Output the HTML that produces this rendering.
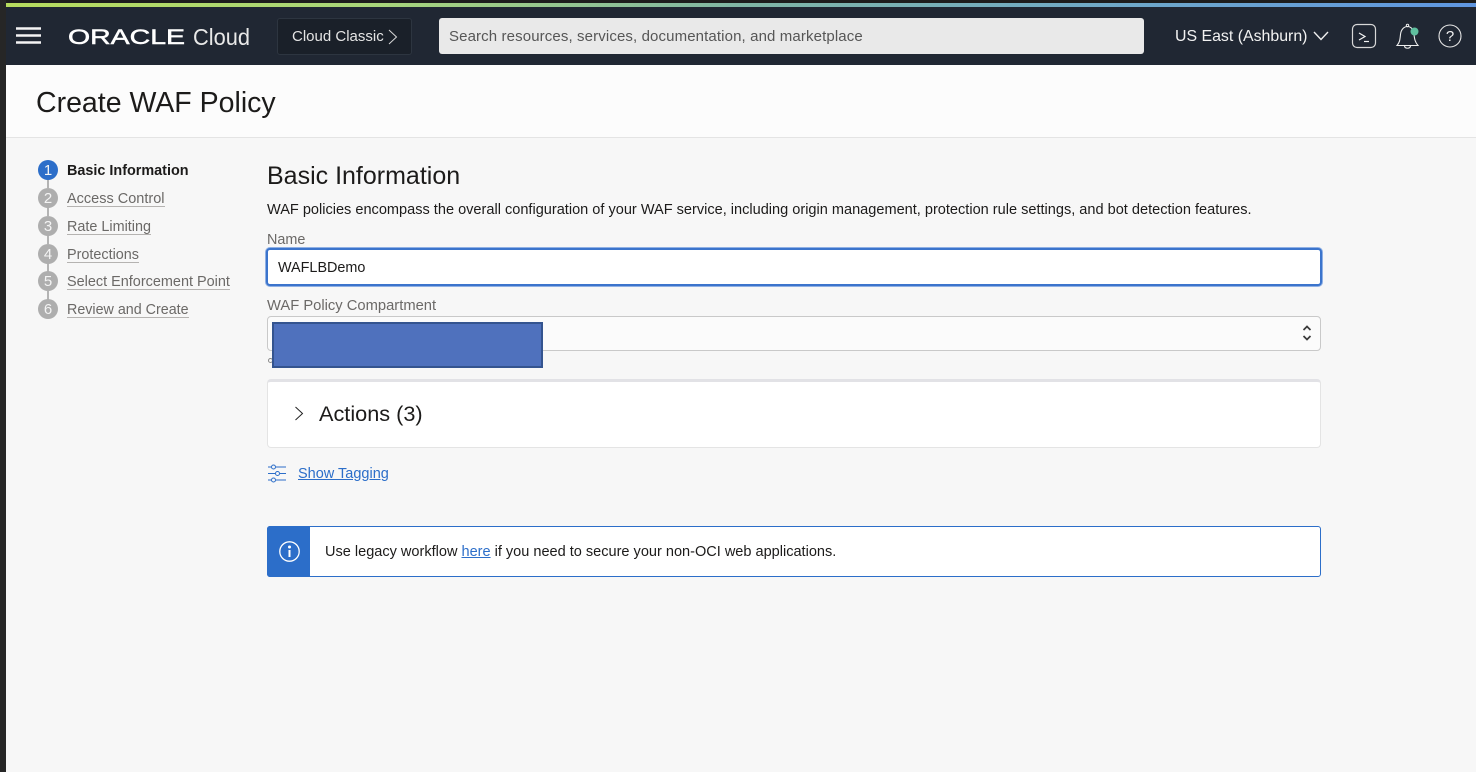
<!DOCTYPE html>
<html lang="en">
<head>
<meta charset="utf-8">
<title>Create WAF Policy</title>
<style>
html,body{margin:0;padding:0;width:1476px;height:772px;overflow:hidden;background:#f7f7f7;font-family:"Liberation Sans",sans-serif;color:#161513}
.a{position:absolute;white-space:nowrap}
a{color:inherit}
.circle{position:absolute;left:38px;width:20px;height:20px;border-radius:50%;background:#aeaeae;color:#f4f4f4;font-size:15px;line-height:21px;text-align:center}
.step{position:absolute;left:67px;font-size:14.4px;line-height:18px;color:#6b6967;white-space:nowrap;border-bottom:1px solid #b5b3b1;height:16px}
.line{position:absolute;left:47px;width:2px;height:9px;background:#b4b4b4}
</style>
</head>
<body>
<div class="a" style="left:0;top:0;width:1476px;height:3px;background:#1d1d1d"></div>
<div class="a" style="left:0;top:0;width:6px;height:772px;background:#262626;z-index:5"></div>
<div class="a" style="left:6px;top:3px;width:1470px;height:4px;background:linear-gradient(90deg,#b7dc5e 0%,#a9d67a 25%,#7fb6a5 50%,#6fa9c8 75%,#5f96e0 100%)"></div>
<div class="a" style="left:6px;top:7px;width:1470px;height:58px;background:#202733"></div>

<svg class="a" style="left:16px;top:27px" width="25" height="17" viewBox="0 0 25 17"><path d="M0 1.500H25M0 8.500H25M0 15.500H25" stroke="#f4f4f4" stroke-width="2.400"/></svg>

<svg class="a" style="left:66px;top:22px" width="190" height="30" viewBox="0 0 190 30">
<text x="2" y="22" font-family="Liberation Sans" font-size="21" fill="#fff" stroke="#fff" stroke-width=".5" textLength="117" lengthAdjust="spacingAndGlyphs">ORACLE</text>
<text x="127" y="23" font-family="Liberation Sans" font-size="23.500" fill="#e8e8e8" textLength="57" lengthAdjust="spacingAndGlyphs">Cloud</text>
</svg>

<div class="a" style="left:277px;top:18px;width:133px;height:35px;background:#1a2029;border:1px solid #2d3540;border-radius:3px"></div>
<div class="a" style="left:292px;top:28px;font-size:15px;line-height:18px;color:#e4e4e4">Cloud Classic</div>
<svg class="a" style="left:387px;top:29px" width="12" height="16" viewBox="0 0 12 16"><path d="M2 1L9.500 8L2 15" fill="none" stroke="#d8d8d8" stroke-width="1"/></svg>

<div class="a" style="left:439px;top:18px;width:705px;height:36px;background:#e9e9e9;border-radius:3px"></div>
<div class="a" style="left:449px;top:28px;font-size:15px;line-height:18px;color:#565656;letter-spacing:.12px">Search resources, services, documentation, and marketplace</div>

<div class="a" style="left:1175px;top:27px;font-size:15.900px;line-height:19px;color:#f2f2f2">US East (Ashburn)</div>
<svg class="a" style="left:1313px;top:30px" width="16" height="12" viewBox="0 0 16 12"><path d="M1 2L8 9.500L15 2" fill="none" stroke="#eee" stroke-width="1.400"/></svg>

<svg class="a" style="left:1351px;top:23px" width="26" height="26" viewBox="0 0 26 26"><rect x="1.500" y="1.500" width="23" height="23" rx="4.500" fill="none" stroke="#d8d8d8" stroke-width="1.200"/><path d="M8 10L14 13.500L8 17" fill="none" stroke="#f4f4f4" stroke-width="1.200"/><path d="M13 18.500H18" stroke="#f4f4f4" stroke-width="1.200"/></svg>
<svg class="a" style="left:1394px;top:23px" width="28" height="26" viewBox="0 0 28 26"><path d="M3 22.500C6 19 6 16 6.500 11.500C7 6.500 10 3.500 13.500 3.500C17 3.500 19.500 6.500 20 11.500C20.500 16 21 19 24 22.500Z" fill="none" stroke="#eee" stroke-width="1.100"/><circle cx="13.500" cy="2.500" r="1.200" fill="none" stroke="#eee" stroke-width="1"/><path d="M10.500 23C11 26 16 26 16.500 23" fill="none" stroke="#eee" stroke-width="1.100"/><circle cx="20.500" cy="8.500" r="4" fill="#5fbf9f"/></svg>
<svg class="a" style="left:1438px;top:24px" width="24" height="24" viewBox="0 0 24 24"><circle cx="12" cy="12" r="11" fill="none" stroke="#e4e4e4" stroke-width="1.100"/><text x="12" y="17" text-anchor="middle" font-family="Liberation Sans" font-size="15" fill="#f2f2f2">?</text></svg>

<div class="a" style="left:6px;top:65px;width:1470px;height:72px;background:#fcfcfc;border-bottom:1px solid #e4e4e4"></div>
<div class="a" style="left:36px;top:86px;font-size:28.500px;line-height:35px;color:#1c1b1a">Create WAF Policy</div>

<div class="line" style="top:179px"></div>
<div class="line" style="top:207px"></div>
<div class="line" style="top:235px"></div>
<div class="line" style="top:263px"></div>
<div class="line" style="top:291px"></div>
<div class="circle" style="top:160px;background:#2c6ec9">1</div>
<div class="circle" style="top:188px">2</div>
<div class="circle" style="top:216px">3</div>
<div class="circle" style="top:244px">4</div>
<div class="circle" style="top:271px">5</div>
<div class="circle" style="top:299px">6</div>
<div class="a" style="left:67px;top:162px;font-size:14.400px;line-height:18px;font-weight:bold;color:#1c1b1a">Basic Information</div>
<div class="step" style="top:190px;font-size:14.500px">Access Control</div>
<div class="step" style="top:218px">Rate Limiting</div>
<div class="step" style="top:246px">Protections</div>
<div class="step" style="top:273px;font-size:14.450px">Select Enforcement Point</div>
<div class="step" style="top:301px;font-size:14.300px">Review and Create</div>

<div class="a" style="left:267px;top:161px;font-size:25px;line-height:31px;color:#1c1b1a">Basic Information</div>
<div class="a" style="left:267px;top:202px;font-size:14.550px;line-height:17px;color:#1c1b1a">WAF policies encompass the overall configuration of your WAF service, including origin management, protection rule settings, and bot detection features.</div>

<div class="a" style="left:267px;top:232px;font-size:14.400px;line-height:16px;color:#6b6967">Name</div>
<div class="a" style="left:266px;top:248px;width:1052px;height:34px;background:#fff;border:2px solid #3b74cc;border-radius:4px;box-shadow:0 0 0 1px #8fb0e4"></div>
<div class="a" style="left:278px;top:259px;font-size:14.400px;line-height:18px;color:#1c1b1a">WAFLBDemo</div>

<div class="a" style="left:267px;top:298px;font-size:14.750px;line-height:17px;color:#6b6967">WAF Policy Compartment</div>
<div class="a" style="left:267px;top:316px;width:1052px;height:33px;background:#fbfbfb;border:1px solid #c9c9c9;border-radius:4px"></div>
<svg class="a" style="left:1301px;top:324px" width="12" height="18" viewBox="0 0 12 18"><path d="M2.500 6L6 2.500L9.500 6M2.500 12L6 15.500L9.500 12" fill="none" stroke="#3a3a3a" stroke-width="1.700"/></svg>
<div class="a" style="left:268px;top:358px;width:5px;height:5px;border:1px solid #8a8a8a;border-radius:50%;box-sizing:border-box"></div>
<div class="a" style="left:272px;top:322px;width:271px;height:46px;box-sizing:border-box;background:#4f71bd;border:2px solid #34548f"></div>

<div class="a" style="left:267px;top:379px;width:1052px;height:65px;background:#fff;border:1px solid #e4e4e4;border-top:3px solid #e2e2e6;border-radius:4px"></div>
<svg class="a" style="left:294px;top:406px" width="10" height="15" viewBox="0 0 10 15"><path d="M1.500 1L8.500 7.500L1.500 14" fill="none" stroke="#222" stroke-width="1"/></svg>
<div class="a" style="left:319px;top:400px;font-size:21.700px;line-height:27px;color:#1c1b1a">Actions (3)</div>

<svg class="a" style="left:267px;top:464px" width="20" height="20" viewBox="0 0 20 20"><g fill="none" stroke="#2c6ec9" stroke-width="1"><path d="M1 3H4M9 3H19M1 9.500H8M13 9.500H19M1 16H4M9 16H19"/><circle cx="6.500" cy="3" r="2"/><circle cx="10.500" cy="9.500" r="2"/><circle cx="6.500" cy="16" r="2"/></g></svg>
<a class="a" style="left:298px;top:466px;font-size:14.500px;line-height:17px;color:#2c6ec9;text-decoration:underline">Show Tagging</a>

<div class="a" style="left:267px;top:526px;width:1054px;height:51px;box-sizing:border-box;background:#fff;border:1px solid #2c6ec9;border-radius:3px"></div>
<div class="a" style="left:267px;top:526px;width:43px;height:51px;background:#2c6ec9;border-radius:3px 0 0 3px"></div>
<svg class="a" style="left:278px;top:540px" width="23" height="23" viewBox="0 0 23 23"><circle cx="11.500" cy="11.500" r="9.700" fill="none" stroke="#fff" stroke-width="1.300"/><circle cx="11.500" cy="7" r="1.500" fill="#fff"/><path d="M11.500 10V17" stroke="#fff" stroke-width="2"/></svg>
<div class="a" style="left:325px;top:544px;font-size:14.540px;line-height:17px;color:#1c1b1a">Use legacy workflow <a style="color:#2c6ec9;text-decoration:underline">here</a> if you need to secure your non-OCI web applications.</div>
</body>
</html>
